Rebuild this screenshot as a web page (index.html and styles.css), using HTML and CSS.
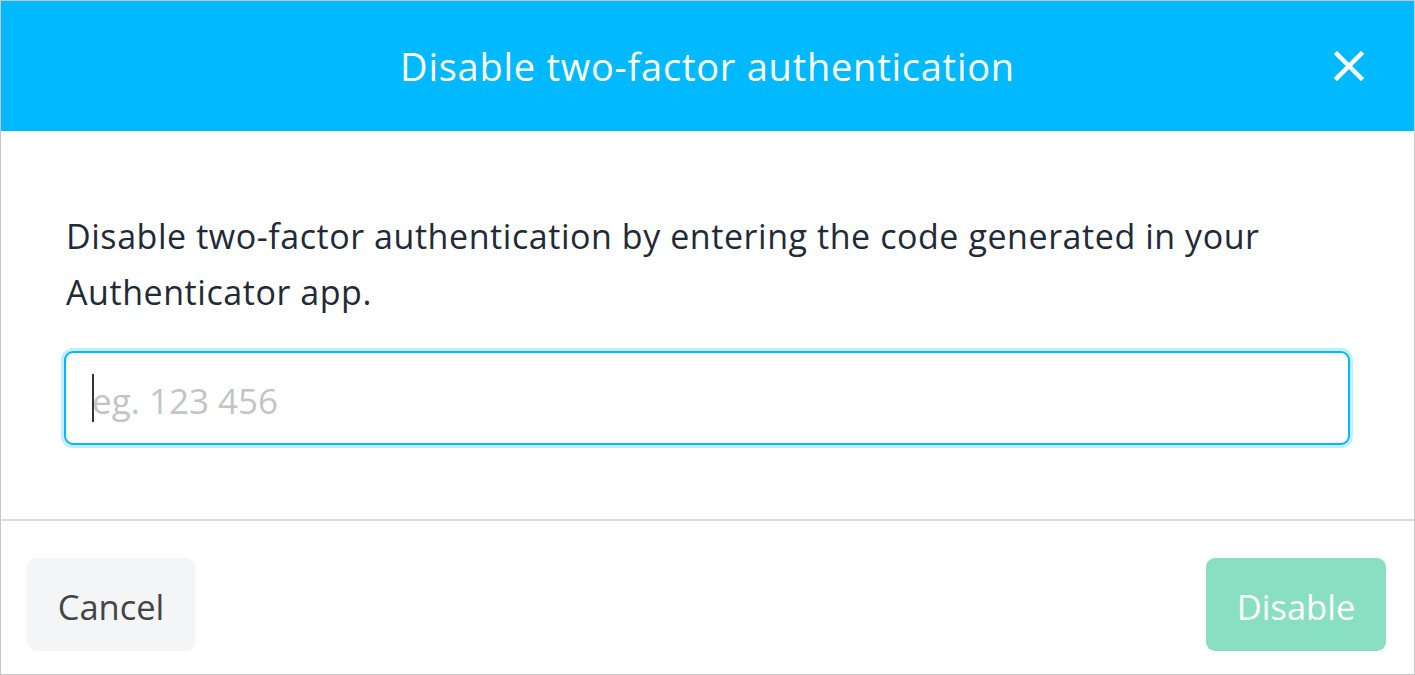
FILE: index.html
```html
<!DOCTYPE html>
<html lang="en">
<head>
<meta charset="utf-8">
<title>Disable two-factor authentication</title>
<link rel="stylesheet" href="styles.css">
</head>
<body>
<div class="modal">
  <header class="modal-header">
    <h1 class="modal-title">Disable two-factor authentication</h1>
    <button class="close" aria-label="Close">
      <svg viewBox="0 0 30 30" width="30" height="30"><path d="M3 3 L27 27 M27 3 L3 27" stroke="#fff" stroke-width="4.5" stroke-linecap="square" fill="none"/></svg>
    </button>
  </header>
  <section class="modal-body">
    <p class="intro">Disable two-factor authentication by entering the code generated in your Authenticator app.</p>
    <div class="field">
      <input class="code-input" type="text" placeholder="eg. 123 456">
      <span class="caret"></span>
    </div>
  </section>
  <footer class="modal-footer">
    <button class="btn btn-cancel">Cancel</button>
    <button class="btn btn-disable">Disable</button>
  </footer>
</div>
</body>
</html>
```
FILE: styles.css
```css
html, body {
  margin: 0;
  padding: 0;
  background: #fff;
}
body {
  font-family: "Segoe UI", "Open Sans", "Noto Sans", sans-serif;
}
.modal {
  width: 1415px;
  height: 675px;
  box-sizing: border-box;
  border: 1px solid #c6c6c6;
  display: flex;
  flex-direction: column;
  overflow: hidden;
}
.modal-header {
  height: 130px;
  background: #00b9ff;
  display: flex;
  align-items: center;
  justify-content: center;
  position: relative;
  flex: none;
}
.modal-title {
  margin: 0;
  color: #fff;
  font-weight: 400;
  font-size: 38px;
  letter-spacing: 0.75px;
}
.close {
  position: absolute;
  right: 50px;
  top: 50px;
  width: 30px;
  height: 30px;
  padding: 0;
  border: 0;
  background: none;
  display: flex;
}
.modal-body {
  padding: 77px 64px 74px 63px;
  flex: none;
  border-bottom: 2px solid #dadada;
}
.intro {
  margin: 0;
  color: #212a36;
  font-size: 34px;
  letter-spacing: 0.56px;
  line-height: 56px;
  padding-left: 2px;
}
.field {
  position: relative;
  margin-top: 31px;
}
.code-input {
  display: block;
  width: 100%;
  height: 94px;
  box-sizing: border-box;
  border: 2px solid #00b9ff;
  border-radius: 9px;
  box-shadow: 0 0 0 3px #c4eeff;
  outline: none;
  padding: 4px 26px 0;
  font-family: inherit;
  font-size: 35px;
  color: #212a36;
  background: #fff;
}
.code-input::placeholder {
  color: #c4c4c4;
}
.caret {
  position: absolute;
  left: 28px;
  top: 23px;
  width: 2px;
  height: 48px;
  background: #333;
}
.modal-footer {
  flex: 1;
  display: flex;
  justify-content: space-between;
  align-items: flex-start;
  padding: 37px 28px 0 26px;
}
.btn {
  height: 93px;
  border: 0;
  border-radius: 9px;
  font-family: inherit;
  font-size: 34.5px;
  padding: 3px 0 0;
}
.btn-cancel {
  background: #f4f5f7;
  color: #444;
  width: 168px;
}
.btn-disable {
  background: #88dfc1;
  color: #fff;
  width: 180px;
}
```
